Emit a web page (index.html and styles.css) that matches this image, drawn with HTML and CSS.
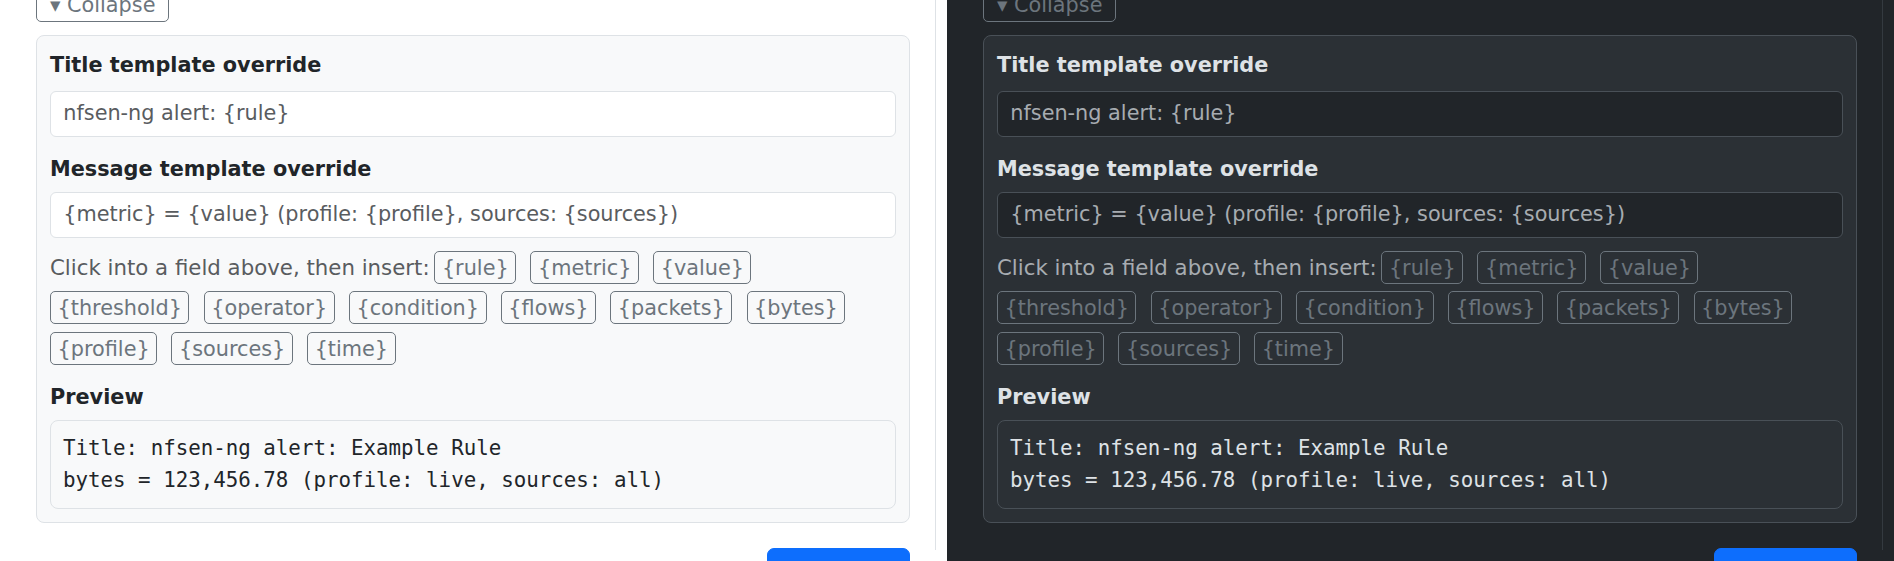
FILE: index.html
```html
<!DOCTYPE html>
<html lang="en">

<head>
  <meta charset="UTF-8">
  <meta name="viewport" content="width=device-width, initial-scale=1.0">
  <title>Notification templates</title>
  <link rel="stylesheet" href="styles.css">
</head>

<body>
<div class="split">

  <!-- Light theme -->
  <section class="pane theme-light">
    <div class="column">
      <div class="content">
        <button class="toggle" aria-expanded="true">&#9662; Collapse</button>

        <div class="card">
          <label class="field-label" for="title-light">Title template override</label>
          <input class="field" id="title-light" type="text" value="nfsen-ng alert: {rule}">

          <label class="field-label second" for="message-light">Message template override</label>
          <input class="field" id="message-light" type="text"
            value="{metric} = {value} (profile: {profile}, sources: {sources})">

          <div class="tags">
            <span class="hint">Click into a field above, then insert:</span>
            <button class="tag">{rule}</button>
            <button class="tag">{metric}</button>
            <button class="tag">{value}</button>
            <button class="tag">{threshold}</button>
            <button class="tag">{operator}</button>
            <button class="tag">{condition}</button>
            <button class="tag">{flows}</button>
            <button class="tag">{packets}</button>
            <button class="tag">{bytes}</button>
            <button class="tag">{profile}</button>
            <button class="tag">{sources}</button>
            <button class="tag">{time}</button>
          </div>

          <div class="field-label preview-label">Preview</div>
          <pre class="preview">Title: nfsen-ng alert: Example Rule
bytes = 123,456.78 (profile: live, sources: all)</pre>
        </div>

        <div class="actions">
          <button class="save">Save rule</button>
        </div>
      </div>
    </div>
  </section>

  <!-- Dark theme -->
  <section class="pane theme-dark">
    <div class="column">
      <div class="content">
        <button class="toggle" aria-expanded="true">&#9662; Collapse</button>

        <div class="card">
          <label class="field-label" for="title-dark">Title template override</label>
          <input class="field" id="title-dark" type="text" value="nfsen-ng alert: {rule}">

          <label class="field-label second" for="message-dark">Message template override</label>
          <input class="field" id="message-dark" type="text"
            value="{metric} = {value} (profile: {profile}, sources: {sources})">

          <div class="tags">
            <span class="hint">Click into a field above, then insert:</span>
            <button class="tag">{rule}</button>
            <button class="tag">{metric}</button>
            <button class="tag">{value}</button>
            <button class="tag">{threshold}</button>
            <button class="tag">{operator}</button>
            <button class="tag">{condition}</button>
            <button class="tag">{flows}</button>
            <button class="tag">{packets}</button>
            <button class="tag">{bytes}</button>
            <button class="tag">{profile}</button>
            <button class="tag">{sources}</button>
            <button class="tag">{time}</button>
          </div>

          <div class="field-label preview-label">Preview</div>
          <pre class="preview">Title: nfsen-ng alert: Example Rule
bytes = 123,456.78 (profile: live, sources: all)</pre>
        </div>

        <div class="actions">
          <button class="save">Save rule</button>
        </div>
      </div>
    </div>
  </section>

</div>
</body>

</html>
```

FILE: styles.css
```css
*,
*::before,
*::after {
  box-sizing: border-box;
}

html,
body {
  margin: 0;
  height: 100%;
  overflow: hidden;
}

body {
  font-family: "DejaVu Sans", sans-serif;
  font-size: 20.8px;
  line-height: 1.5;
}

.split {
  display: flex;
  height: 100vh;
}

/* theme colours */

.theme-light {
  --bg: #fff;
  --card-bg: #f8f9fa;
  --border: #dee2e6;
  --rule: #dee2e6;
  --text: #212529;
  --muted: #595c5f;
  --field-bg: #fff;
  --tag: #6c757d;
}

.theme-dark {
  --bg: #212529;
  --card-bg: #2b3035;
  --border: #495057;
  --rule: #343a40;
  --text: #dee2e6;
  --muted: #a7acb1;
  --field-bg: #212529;
  --tag: #6c757d;
}

.pane {
  flex: 0 0 947px;
  background: var(--bg);
  color: var(--text);
}

.column {
  width: 936px;
  height: 100%;
  border-right: 1px solid var(--rule);
}

.content {
  margin-top: -11px;
  padding: 0 25px 0 36px;
}

button {
  font: inherit;
  line-height: 1.5;
  background: transparent;
  cursor: pointer;
}

.toggle {
  padding: 0 13px;
  color: var(--tag);
  border: 1px solid var(--tag);
  border-radius: 5px;
}

.card {
  margin-top: 12.7px;
  padding: 14.5px 13px 13px;
  background: var(--card-bg);
  border: 1px solid var(--border);
  border-radius: 8px;
}

.field-label {
  display: block;
  font-weight: bold;
  margin-bottom: 9px;
}

.field-label.second {
  margin-top: 17.4px;
  margin-bottom: 6.6px;
}

.field {
  display: block;
  width: 100%;
  padding: 6.4px 12.3px;
  font: inherit;
  line-height: 1.5;
  color: var(--muted);
  background: var(--field-bg);
  border: 1px solid var(--border);
  border-radius: 6px;
}

.tags {
  display: flex;
  flex-wrap: wrap;
  align-items: center;
  column-gap: 14.3px;
  row-gap: 7.4px;
  margin-top: 13px;
}

.hint {
  font-size: 21.3px;
  line-height: 31.2px;
  color: var(--muted);
  margin-right: -9.5px;
}

.tag {
  padding: 1px 6.5px 0;
  line-height: 30.2px;
  color: var(--tag);
  border: 1px solid var(--tag);
  border-radius: 5px;
}

.preview-label {
  margin-top: 17.2px;
  margin-bottom: 7px;
}

.preview {
  margin: 0;
  padding: 12px;
  font-family: "DejaVu Sans Mono", monospace;
  font-size: 20.8px;
  line-height: 1.5;
  color: var(--text);
  background: var(--card-bg);
  border: 1px solid var(--border);
  border-radius: 8px;
}

.actions {
  display: flex;
  justify-content: flex-end;
  margin-top: 25px;
}

.save {
  width: 143px;
  padding: 6.4px 12px;
  color: #fff;
  background: #0d6efd;
  border: 1px solid #0d6efd;
  border-radius: 7px;
}
```
